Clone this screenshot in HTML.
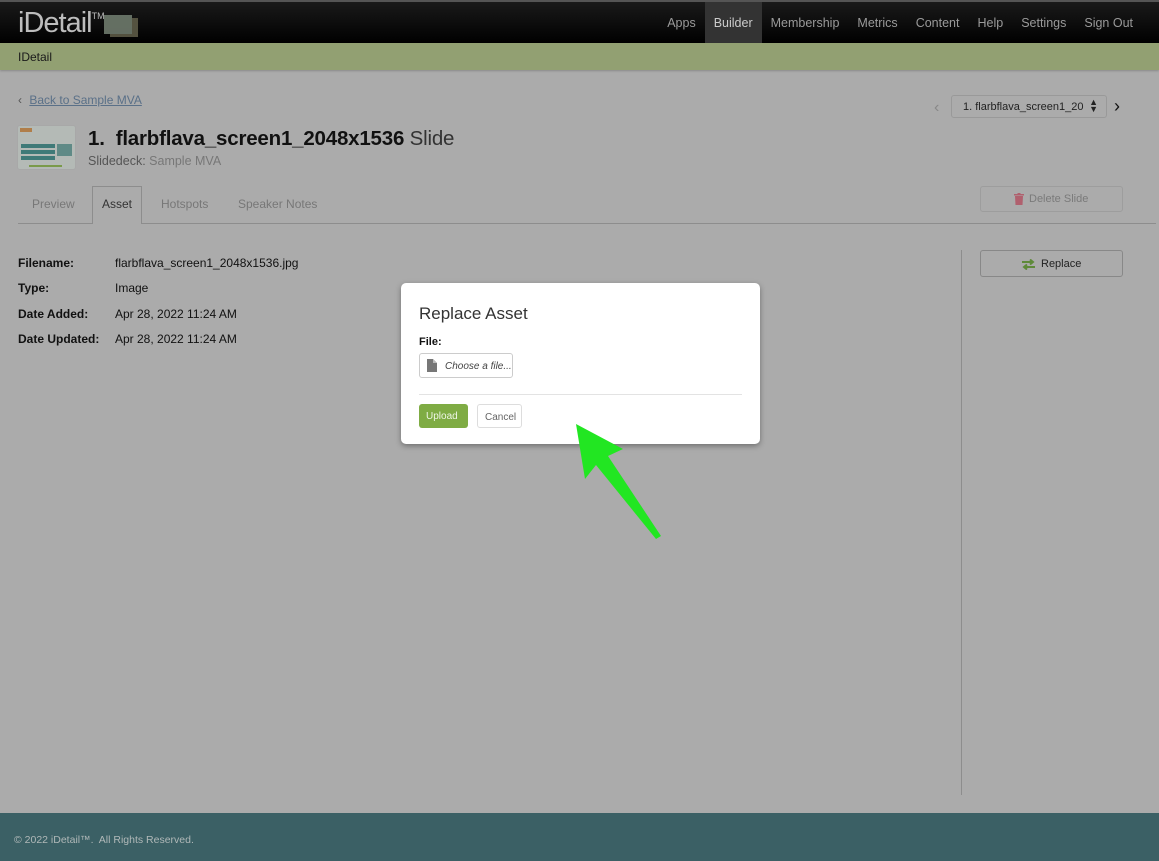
<!DOCTYPE html>
<html><head><meta charset="utf-8"><style>
*{box-sizing:border-box;margin:0;padding:0}
body{width:1159px;height:861px;overflow:hidden;background:#ababab;font-family:"Liberation Sans",Arial,sans-serif;position:relative;color:#111}
.top{position:absolute;left:0;top:0;width:1159px;height:43px;background:linear-gradient(#1a1a1a,#000);border-top:2px solid #555}
.logo{position:absolute;left:18px;top:5px;font-size:29px;color:#bdbdbd;letter-spacing:-1px}
.logo sup{font-size:9px;vertical-align:top;position:relative;top:4px;letter-spacing:0}
.logo .sq{position:absolute;left:86px;top:8px;width:28px;height:19px;background:#6e7a6c;box-shadow:6px 3px 0 #5c5a46;opacity:.9}
.nav{position:absolute;right:17px;top:0;height:41px;display:flex}
.nav a{color:#9a9a9a;font-size:12.5px;padding:14px 9px 0;height:41px}
.nav a.on{background:#333;color:#ccc}
.green{position:absolute;left:0;top:43px;width:1159px;height:27px;background:#92a072;font-size:12px;padding:7px 18px;color:#1a1a1a;box-shadow:0 1px 2px rgba(0,0,0,.2)}
.abs{position:absolute}
.foot{position:absolute;left:0;top:813px;width:1159px;height:48px;background:#3b6065;color:#b0b8b8;font-size:10.5px;padding:21px 14px}
</style></head><body>
<div class="top"><div class="logo">iDetail<sup>TM</sup><span class="sq"></span></div>
<div class="nav"><a>Apps</a><a class="on">Builder</a><a>Membership</a><a>Metrics</a><a>Content</a><a>Help</a><a>Settings</a><a>Sign Out</a></div></div>
<div class="green">IDetail</div>

<div class="abs" style="left:18px;top:93px;font-size:12px;color:#555">‹ <span style="color:#5a7088;text-decoration:underline;margin-left:4px">Back to Sample MVA</span></div>
<div class="abs" style="left:17px;top:125px;width:59px;height:45px;background:#b4bab6;border-radius:3px;border:1px solid #a8a8a8">
 <div style="position:absolute;left:2px;top:2px;width:12px;height:4px;background:#b07e4a"></div>
 <div style="position:absolute;left:3px;top:18px;width:34px;height:4px;background:#3f7a78"></div>
 <div style="position:absolute;left:3px;top:24px;width:34px;height:4px;background:#3f7a78"></div>
 <div style="position:absolute;left:3px;top:30px;width:34px;height:4px;background:#3f7a78"></div>
 <div style="position:absolute;left:39px;top:18px;width:15px;height:12px;background:#5f8a86"></div>
 <div style="position:absolute;left:11px;top:39px;width:33px;height:2px;background:#7a9a4a"></div>
</div>
<div class="abs" style="left:88px;top:127px;font-size:20.5px;font-weight:bold;color:#111;letter-spacing:-0.2px">1.&nbsp; flarbflava_screen1_2048x1536 <span style="font-weight:normal;color:#333">Slide</span></div>
<div class="abs" style="left:88px;top:154px;font-size:12.5px;color:#555">Slidedeck: <span style="color:#777">Sample MVA</span></div>

<div class="abs" style="left:934px;top:99px;font-size:16px;color:#888">‹</div>
<div class="abs" style="left:951px;top:95px;width:156px;height:23px;border:1px solid #999;border-radius:3px;font-size:11px;padding:5px 11px;color:#222">1. flarbflava_screen1_20<span style="position:absolute;right:8px;top:3px;font-size:9px;line-height:7px">▲<br>▼</span></div>
<div class="abs" style="left:1114px;top:96px;font-size:18px;color:#111">›</div>

<div class="abs" style="left:18px;top:223px;width:1138px;height:1px;background:#8d8d8d"></div>
<div class="abs" style="left:92px;top:186px;width:50px;height:38px;border:1px solid #8d8d8d;border-bottom:none;background:#ababab"></div>
<div class="abs" style="left:32px;top:197px;font-size:12px;color:#777">Preview</div>
<div class="abs" style="left:102px;top:197px;font-size:12px;color:#333">Asset</div>
<div class="abs" style="left:161px;top:197px;font-size:12px;color:#777">Hotspots</div>
<div class="abs" style="left:238px;top:197px;font-size:12px;color:#777">Speaker Notes</div>
<div class="abs" style="left:980px;top:186px;width:143px;height:26px;border:1px solid #9d9d9d;border-radius:3px;font-size:11px;color:#7a7a7a;padding:6px 0 0 48px"><svg style="position:absolute;left:33px;top:6px" width="10" height="12" viewBox="0 0 10 12"><path d="M0 1h10v1.5H0zM3.5 0h3v1h-3zM1 3h8l-.5 9h-7z" fill="#b0606e"/></svg>Delete Slide</div>

<div class="abs" style="left:18px;top:251px;font-size:12px;line-height:25.3px;font-weight:bold">Filename:<br>Type:<br>Date Added:<br>Date Updated:</div>
<div class="abs" style="left:115px;top:251px;font-size:12px;line-height:25.3px">flarbflava_screen1_2048x1536.jpg<br>Image<br>Apr 28, 2022 11:24 AM<br>Apr 28, 2022 11:24 AM</div>
<div class="abs" style="left:961px;top:250px;width:1px;height:545px;background:#8d8d8d"></div>
<div class="abs" style="left:980px;top:250px;width:143px;height:27px;border:1px solid #888;border-radius:3px;font-size:11px;color:#222;padding:7px 0 0 60px"><svg style="position:absolute;left:40px;top:8px" width="15" height="11" viewBox="0 0 15 11"><path d="M1 3h11M9 0.5l3 2.5-3 2.5M14 8H3M6 5.5l-3 2.5 3 2.5" stroke="#5f8a3a" stroke-width="2" fill="none"/></svg>Replace</div>

<div class="abs" style="left:401px;top:283px;width:359px;height:161px;background:#fff;border-radius:5px;box-shadow:0 2px 6px rgba(0,0,0,.35)">
 <div class="abs" style="left:18px;top:21px;font-size:17px;color:#333">Replace Asset</div>
 <div class="abs" style="left:18px;top:53px;font-size:11px;font-weight:bold">File:</div>
 <div class="abs" style="left:18px;top:70px;width:94px;height:25px;border:1px solid #ccc;border-radius:3px;font-size:10px;font-style:italic;color:#444;padding:7px 0 0 25px"><svg class="abs" style="left:7px;top:5px" width="10" height="13" viewBox="0 0 10 13"><path d="M0 0h6l4 4v9H0z" fill="#777"/><path d="M6 0v4h4" fill="#bbb"/></svg>Choose a file...</div>
 <div class="abs" style="left:18px;top:111px;width:323px;height:1px;background:#e3e3e3"></div>
 <div class="abs" style="left:18px;top:121px;width:49px;height:24px;background:#7fac44;border-radius:3px;color:#eef6e6;font-size:10px;padding:7px 0 0 7px">Upload</div>
 <div class="abs" style="left:76px;top:121px;width:45px;height:24px;border:1px solid #ddd;border-radius:3px;color:#666;font-size:10px;padding:7px 0 0 7px">Cancel</div>
</div>
<svg class="abs" style="left:560px;top:415px" width="110" height="130" viewBox="560 415 110 130"><path d="M576 424 L623 449 L608 456 L661 536 L656 539 L596 465 L585 479 Z" fill="#22e622"/></svg>

<div class="foot">© 2022 iDetail™.&nbsp; All Rights Reserved.</div>
</body></html>
